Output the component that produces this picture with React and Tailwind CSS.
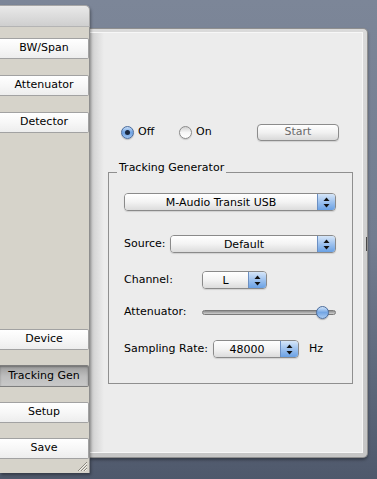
import React from "react";

const F = "font-['DejaVu_Sans',sans-serif] text-[11px] text-black";

function Arrows() {
  return (
    <svg width="7" height="11" viewBox="0 0 7 11">
      <path d="M3.5 0.5 L6.5 4 L0.5 4 Z" fill="#111" />
      <path d="M3.5 10.5 L6.5 7 L0.5 7 Z" fill="#111" />
    </svg>
  );
}

function Popup({ className, text }) {
  return (
    <div className={`flex h-[18px] rounded-[4px] border border-[#8a8a8a] overflow-hidden shadow-[0_1px_1px_rgba(0,0,0,0.12)] ${className}`}>
      <div className="flex-1 flex items-center justify-center bg-linear-to-b from-white via-[#f3f3f3] to-[#dcdcdc] leading-none">
        {text}
      </div>
      <div className="w-[18px] flex items-center justify-center border-l border-[#6b8fc2] bg-linear-to-b from-[#d6e6f8] via-[#9ec2ee] to-[#6aa1e4]">
        <Arrows />
      </div>
    </div>
  );
}

function Radio({ on }) {
  return on ? (
    <div className="w-[13px] h-[13px] rounded-full border border-[#4b6c9c] bg-linear-to-b from-[#c6dcf6] via-[#6fa2e2] to-[#9fc4f0] flex items-center justify-center shadow-[0_1px_1px_rgba(0,0,0,0.2)]">
      <div className="w-[5px] h-[5px] rounded-full bg-[#1b2940]" />
    </div>
  ) : (
    <div className="w-[13px] h-[13px] rounded-full border border-[#8b8b8b] bg-linear-to-b from-[#d2d2d2] via-[#f6f6f6] to-white shadow-[0_1px_1px_rgba(0,0,0,0.15)]" />
  );
}

function DBtn({ label, active }) {
  return active ? (
    <div className="h-[22px] w-[89px] flex items-center justify-center border-y border-r border-[#7e7e7e] rounded-r-[2px] bg-linear-to-b from-[#9c9c9c] via-[#bdbdbd] to-[#c9c9c9] shadow-[inset_0_1px_2px_rgba(0,0,0,0.3)]">
      {label}
    </div>
  ) : (
    <div className="h-[21px] w-[89px] flex items-center justify-center border-y border-r border-[#a2a2a2] rounded-r-[2px] bg-linear-to-b from-white via-[#f7f7f7] to-[#ededed]">
      {label}
    </div>
  );
}

export default function App() {
  return (
    <div className={`${F} w-[377px] h-[479px] overflow-hidden flex items-start bg-linear-to-b from-[#7c8698] via-[#737d90] to-[#4f596c]`}>
      {/* Drawer */}
      <div className="relative z-10 w-[90px] mt-[5px] h-[468px] flex flex-col shadow-[1px_2px_3px_rgba(0,0,0,0.35)] rounded-tr-[5px]">
        <div className="h-[22px] rounded-tr-[5px] border-t border-r border-[#a6a6a6] bg-linear-to-b from-[#e9e9e9] to-[#cfcfcf] border-b border-b-[#b4b4b4]" />
        <div className="flex-1 flex flex-col bg-[#d6d3ca] border-r border-[#8e8e8e]">
          <div className="flex flex-col gap-[16px] pt-[11px]">
            <DBtn label="BW/Span" />
            <DBtn label="Attenuator" />
            <DBtn label="Detector" />
          </div>
          <div className="flex-1" />
          <div className="flex flex-col gap-[15px]">
            <DBtn label="Device" />
            <DBtn label="Tracking Gen" active />
            <DBtn label="Setup" />
            <DBtn label="Save" />
          </div>
          <div className="h-[14px] flex justify-end items-end pr-[1px] pb-[1px]">
            <svg width="11" height="11" viewBox="0 0 11 11">
              <path d="M1 10 L10 1 M4 10 L10 4 M7 10 L10 7" stroke="#8a877f" strokeWidth="1" />
              <path d="M2 10 L10 2 M5 10 L10 5 M8 10 L10 8" stroke="#f2f0ea" strokeWidth="1" />
            </svg>
          </div>
        </div>
      </div>

      {/* Main window */}
      <div className="relative w-[278px] h-[430px] mt-[28px] rounded-r-[5px] border-t border-r border-b border-[#8f8f8f] bg-linear-to-b from-[#dadada] to-[#c6c6c6] pt-[3px] pr-[4px] pb-[4px] shadow-[0_2px_3px_rgba(0,0,0,0.35)]">
        <div className="absolute right-[0px] top-[208px] w-[1px] h-[14px] bg-[#4a4a4a]" />
        <div className="h-full bg-[#ececec] border-t border-r border-b border-[#f7f7f7] relative">
          <div className="absolute left-0 top-0 bottom-0 w-[14px] bg-linear-to-r from-[#cdcdcd] to-transparent" />
          <div className="relative flex flex-col">
            {/* Radio row */}
            <div className="mt-[91px] h-[17px] flex items-center pl-[31px]">
              <div className="w-[58px] flex items-center gap-[4px]">
                <Radio on />
                <span>Off</span>
              </div>
              <div className="w-[78px] flex items-center gap-[4px]">
                <Radio />
                <span>On</span>
              </div>
              <div className="w-[82px] h-[17px] rounded-[4px] border border-[#8c8c8c] bg-linear-to-b from-white via-[#f1f1f1] to-[#d9d9d9] flex items-center justify-center text-[#6a6a6a] shadow-[0_1px_1px_rgba(0,0,0,0.12)]">
                Start
              </div>
            </div>

            {/* Group box */}
            <div className="relative ml-[18px] mt-[31px] w-[245px] border border-[#8f8f8f] flex flex-col pt-[20px] pl-[15px] pb-[25px]">
              <div className="absolute left-[8px] top-[-12px] px-[2px] bg-[#ececec] leading-[13px]">Tracking Generator</div>
              <Popup className="w-[212px]" text="M-Audio Transit USB" />
              <div className="mt-[24px] flex items-center">
                <span className="w-[46px]">Source:</span>
                <Popup className="w-[166px]" text="Default" />
              </div>
              <div className="mt-[18px] flex items-center">
                <span className="w-[78px]">Channel:</span>
                <Popup className="w-[65px]" text="L" />
              </div>
              <div className="mt-[14px] h-[18px] flex items-center">
                <span className="w-[78px]">Attenuator:</span>
                <div className="relative w-[134px] h-[5px] rounded-full border border-[#7a7a7a] bg-linear-to-b from-[#8e8e8e] to-[#cfcfcf]">
                  <div className="absolute left-[113px] top-[-5px] w-[13px] h-[13px] rounded-full border border-[#4b6c9c] bg-linear-to-b from-[#d0e3f8] via-[#74a6e4] to-[#a9cbf2] shadow-[0_1px_1px_rgba(0,0,0,0.25)]" />
                </div>
              </div>
              <div className="mt-[19px] flex items-center">
                <span className="w-[89px]">Sampling Rate:</span>
                <Popup className="w-[86px]" text="48000" />
                <span className="ml-[10px]">Hz</span>
              </div>
            </div>
          </div>
        </div>
      </div>
    </div>
  );
}
